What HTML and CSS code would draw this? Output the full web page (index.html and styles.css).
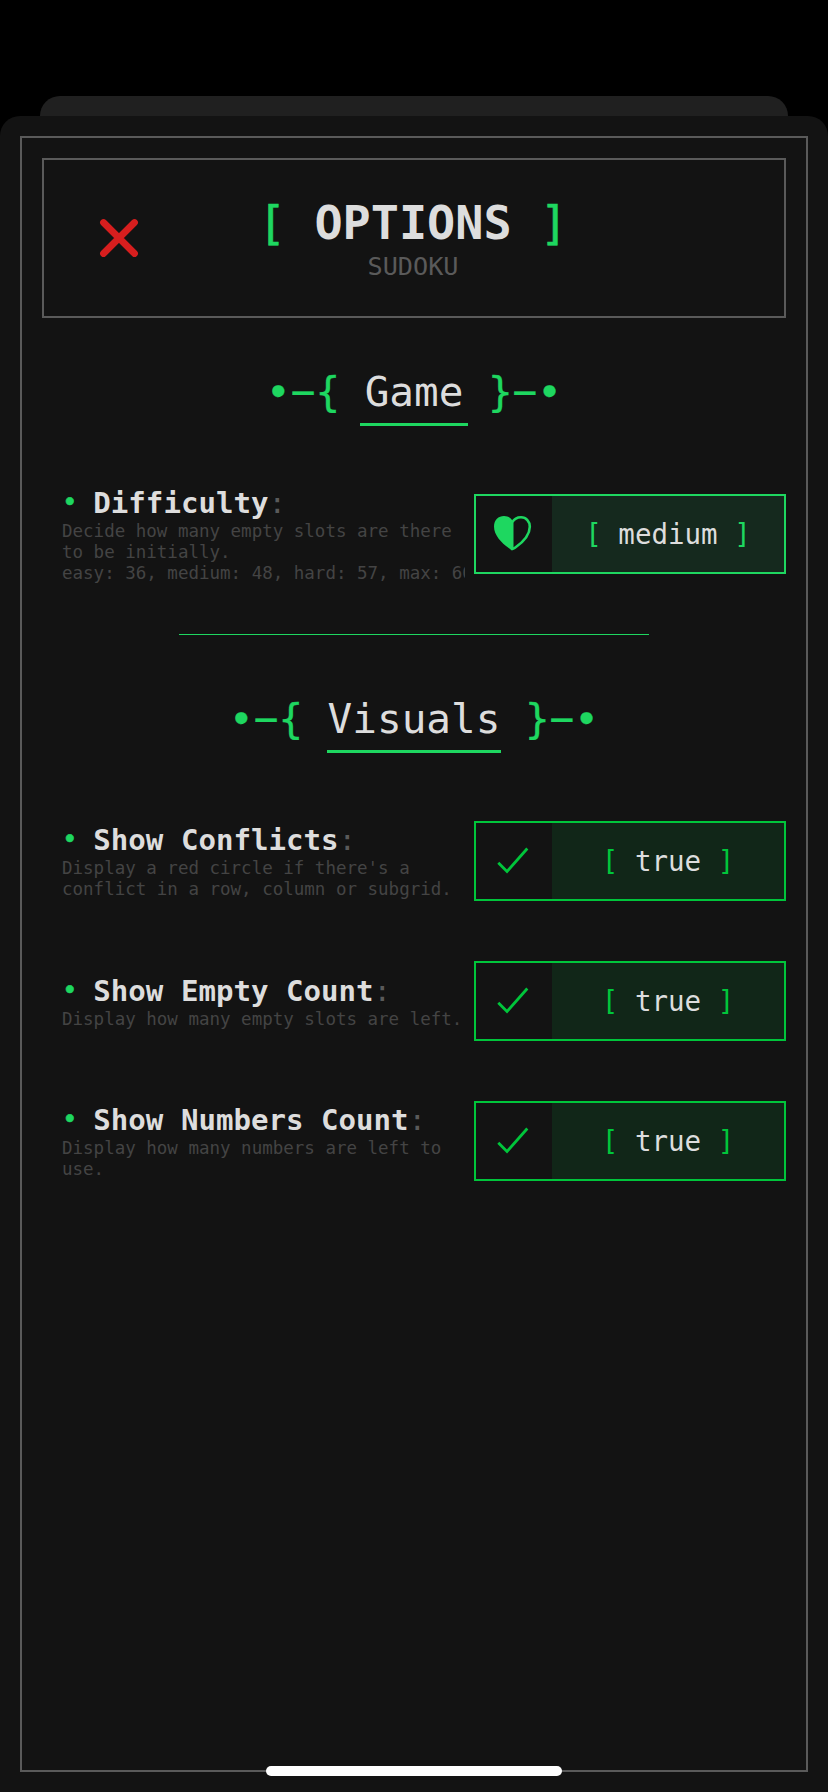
FILE: index.html
```html
<!DOCTYPE html>
<html lang="en">
<head>
<meta charset="utf-8">
<title>Sudoku Options</title>
<link rel="stylesheet" href="styles.css">
</head>
<body>
<div class="back-sheet"></div>
<main class="sheet">
  <div class="frame">
    <header class="header">
      <svg class="close" viewBox="0 0 40 40"><path d="M4.500 4.500 35.500 35.500M35.500 4.500 4.500 35.500"/></svg>
      <div class="titles">
        <h1 class="title"><span class="bracket">[</span> OPTIONS <span class="bracket">]</span></h1>
        <p class="subtitle">SUDOKU</p>
      </div>
    </header>

    <h2 class="section"><span class="decor">•−{</span><span class="name name-game">Game</span><span class="decor">}−•</span></h2>
    <div class="row row-game">
      <div class="info">
        <h3 class="label"><span class="dot">• </span>Difficulty<span class="colon">:</span></h3>
        <p class="desc">Decide how many empty slots are there<br>to be initially.<br>easy: 36, medium: 48, hard: 57, max: 60</p>
      </div>
      <div class="button">
        <div class="icon"><svg viewBox="1 1 50 50"><path class="solid" d="M24.700 42.200C23.500 42.200 22.500 41.500 21 40.300C13 34.500 6 27 6 18.500C6 12 10.500 8 16 8C20 8 23 10 24.700 13Z"/><path class="line" d="M24.200 14.500C26 11.200 29 9.300 33 9.300C38.300 9.300 41.800 13.400 41.800 18.700C41.800 27 34.500 34.500 27 39.800C26 40.500 25.300 40.900 24.200 40.900Z"/></svg></div>
        <div class="value"><i>[</i> medium <i>]</i></div>
      </div>
    </div>
    <hr class="divider">

    <h2 class="section section-visuals"><span class="decor">•−{</span><span class="name">Visuals</span><span class="decor">}−•</span></h2>
    <div class="rows">
      <div class="row">
        <div class="info">
          <h3 class="label"><span class="dot">• </span>Show Conflicts<span class="colon">:</span></h3>
          <p class="desc">Display a red circle if there's a<br>conflict in a row, column or subgrid.</p>
        </div>
        <div class="button toggle">
          <div class="icon"><svg viewBox="1 0 50 50"><path class="check" d="M10.300 26.800 19 35.500 39.300 12.500"/></svg></div>
          <div class="value"><i>[</i> true <i>]</i></div>
        </div>
      </div>
      <div class="row">
        <div class="info">
          <h3 class="label"><span class="dot">• </span>Show Empty Count<span class="colon">:</span></h3>
          <p class="desc">Display how many empty slots are left.</p>
        </div>
        <div class="button toggle">
          <div class="icon"><svg viewBox="1 0 50 50"><path class="check" d="M10.300 26.800 19 35.500 39.300 12.500"/></svg></div>
          <div class="value"><i>[</i> true <i>]</i></div>
        </div>
      </div>
      <div class="row">
        <div class="info">
          <h3 class="label"><span class="dot">• </span>Show Numbers Count<span class="colon">:</span></h3>
          <p class="desc">Display how many numbers are left to<br>use.</p>
        </div>
        <div class="button toggle">
          <div class="icon"><svg viewBox="1 0 50 50"><path class="check" d="M10.300 26.800 19 35.500 39.300 12.500"/></svg></div>
          <div class="value"><i>[</i> true <i>]</i></div>
        </div>
      </div>
    </div>
  </div>
</main>
<div class="home-bar"></div>
</body>
</html>
```

FILE: styles.css
```css
* { box-sizing: border-box; margin: 0; padding: 0; }
body {
  width: 828px;
  height: 1792px;
  padding-top: 96px;
  overflow: hidden;
  background: #000;
  color: #ddd;
  font-family: "DejaVu Sans Mono", monospace;
  font-variant-ligatures: none;
}
.back-sheet {
  height: 20px;
  margin: 0 40px;
  border-radius: 20px 20px 0 0;
  background: #202020;
}
.sheet {
  height: 1676px;
  padding: 20px;
  border-radius: 20px 20px 0 0;
  background: #131313;
}
.frame {
  height: 1636px;
  padding: 20px;
  border: 2px solid #5a5a5a;
}
.header {
  display: grid;
  grid-template-columns: 150px 1fr 150px;
  height: 160px;
  border: 2px solid #5a5a5a;
}
.close {
  width: 40px;
  height: 40px;
  margin: 58px 0 0 55px;
  fill: none;
  stroke: #d71e1e;
  stroke-width: 6.8;
  stroke-linecap: round;
}
.titles { padding: 35px 2px 0 0; text-align: center; }
.title {
  font-size: 46.8px;
  line-height: 56px;
  white-space: nowrap;
}
.bracket { color: #1ed760; font-weight: 400; -webkit-text-stroke: 0.6px; }
.subtitle {
  margin-top: 1px;
  color: #5a5a5a;
  font-size: 25.2px;
  line-height: 30px;
}
.section {
  display: flex;
  justify-content: center;
  height: 60px;
  margin-top: 50px;
  color: #1ed760;
  font-size: 41px;
  font-weight: 400;
  line-height: 48px;
}
.decor { -webkit-text-stroke: 0.3px; }
.name {
  height: 58px;
  margin: 0 23.500px;
  padding: 0 1px;
  border-bottom: 3px solid #1ed760;
  color: #ddd;
}
.name-game { margin: 0 20px; padding: 0 4.500px; }
.row {
  display: flex;
  align-items: center;
  justify-content: space-between;
  height: 80px;
}
.row-game { margin-top: 66px; }
.info {
  width: 423px;
  padding-left: 20px;
  overflow: hidden;
  white-space: nowrap;
}
.label { height: 36px; font-size: 29.100px; line-height: 36px; }
.dot {
  color: #1ed760;
  font-size: 26px;
  font-weight: 400;
  line-height: 1;
  vertical-align: 2px;
  -webkit-text-stroke: 0.6px;
}
.colon { color: #5a5a5a; font-weight: 400; }
.desc { color: #444; font-size: 17.500px; line-height: 21px; }
.button {
  display: flex;
  width: 312px;
  height: 80px;
  border: 2px solid #1ed760;
  color: #1ed760;
}
.toggle { border-color: #00c53b; color: #00c53b; }
.icon {
  display: grid;
  place-items: center;
  width: 76px;
}
.icon svg { width: 50px; height: 50px; }
.solid { fill: currentColor; }
.line { fill: none; stroke: currentColor; stroke-width: 2.600; }
.check { fill: none; stroke: currentColor; stroke-width: 2.800; }
.value {
  flex: 1;
  background: #15291e;
  color: #ddd;
  font-size: 27.500px;
  line-height: 76px;
  text-align: center;
}
.toggle .value { background: #112618; }
.value i { color: #1ed760; font-style: normal; }
.toggle i { color: #00c53b; }
.divider {
  width: 470px;
  height: 1px;
  margin: 60px auto 0;
  border: 0;
  background: #1ed760;
}
.section-visuals { margin-top: 60px; }
.rows {
  display: grid;
  gap: 60px;
  margin-top: 66px;
}
.home-bar {
  position: absolute;
  left: 266px;
  top: 1766px;
  width: 296px;
  height: 10px;
  border-radius: 5px;
  background: #fff;
}
```
